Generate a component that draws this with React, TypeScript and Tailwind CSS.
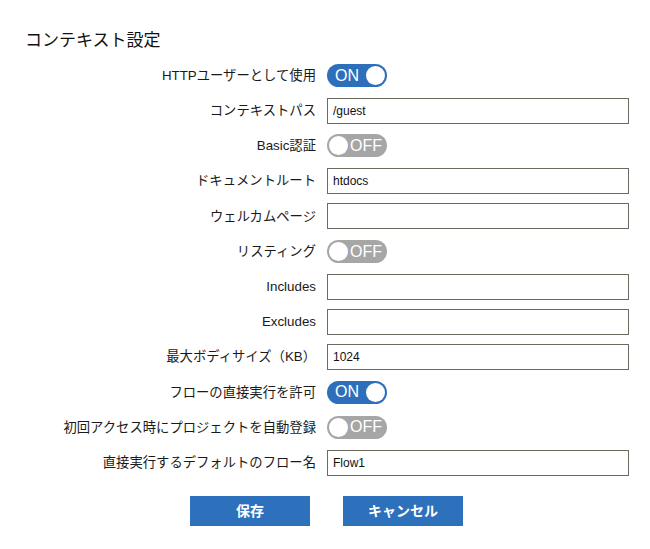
import { useState } from "react";

type Row =
  | { label: string; kind: "toggle"; on: boolean }
  | { label: string; kind: "input"; value: string };

const rows: Row[] = [
  { label: "HTTPユーザーとして使用", kind: "toggle", on: true },
  { label: "コンテキストパス", kind: "input", value: "/guest" },
  { label: "Basic認証", kind: "toggle", on: false },
  { label: "ドキュメントルート", kind: "input", value: "htdocs" },
  { label: "ウェルカムページ", kind: "input", value: "" },
  { label: "リスティング", kind: "toggle", on: false },
  { label: "Includes", kind: "input", value: "" },
  { label: "Excludes", kind: "input", value: "" },
  { label: "最大ボディサイズ（KB）", kind: "input", value: "1024" },
  { label: "フローの直接実行を許可", kind: "toggle", on: true },
  { label: "初回アクセス時にプロジェクトを自動登録", kind: "toggle", on: false },
  { label: "直接実行するデフォルトのフロー名", kind: "input", value: "Flow1" },
];

function Toggle({ initial }: { initial: boolean }) {
  const [on, setOn] = useState(initial);
  return (
    <button
      type="button"
      onClick={() => setOn((v) => !v)}
      className={`relative w-[60px] h-[23px] rounded-full flex items-center ${on ? "bg-[#2d6fbb]" : "bg-[#a6a6a6]"}`}
    >
      <span
        className={`absolute top-[2px] w-[19px] h-[19px] rounded-full bg-white ${on ? "right-[2px]" : "left-[2px]"}`}
      />
      <span
        className={`absolute text-white text-[16px] leading-none font-['Liberation_Sans',sans-serif] ${on ? "left-[8px]" : "left-[23px]"}`}
      >
        {on ? "ON" : "OFF"}
      </span>
    </button>
  );
}

export default function App() {
  const [values, setValues] = useState<Record<number, string>>(() => {
    const v: Record<number, string> = {};
    rows.forEach((r, i) => {
      if (r.kind === "input") v[i] = r.value;
    });
    return v;
  });

  return (
    <div className="w-[650px] h-[549px] bg-white text-[#111] font-['Liberation_Sans','Noto_Sans_CJK_JP',sans-serif]">
      <h1 className="pl-[25px] pt-[29px] text-[17px] leading-[24px] text-[#111]">
        コンテキスト設定
      </h1>

      <div className="mt-[5px]">
        {rows.map((r, i) => (
          <div key={i} className="h-[35.2px] flex items-center">
            <label className="w-[316px] text-right text-[13.33px] leading-none text-[#1a1a1a]">
              {r.label}
            </label>
            <div className="ml-[11px] flex items-center">
              {r.kind === "toggle" ? (
                <Toggle initial={r.on} />
              ) : (
                <input
                  value={values[i]}
                  onChange={(e) => setValues((v) => ({ ...v, [i]: e.target.value }))}
                  className="w-[302px] h-[26px] border border-[#6b6b62] px-[5px] text-[12px] text-[#111] outline-none"
                />
              )}
            </div>
          </div>
        ))}
      </div>

      <div className="mt-[16px] flex justify-center gap-[33px] pl-[3px]">
        <button className="w-[120px] h-[30px] bg-[#2d70bc] text-white font-bold text-[14px]">
          保存
        </button>
        <button className="w-[120px] h-[30px] bg-[#2d70bc] text-white font-bold text-[14px]">
          キャンセル
        </button>
      </div>
    </div>
  );
}
